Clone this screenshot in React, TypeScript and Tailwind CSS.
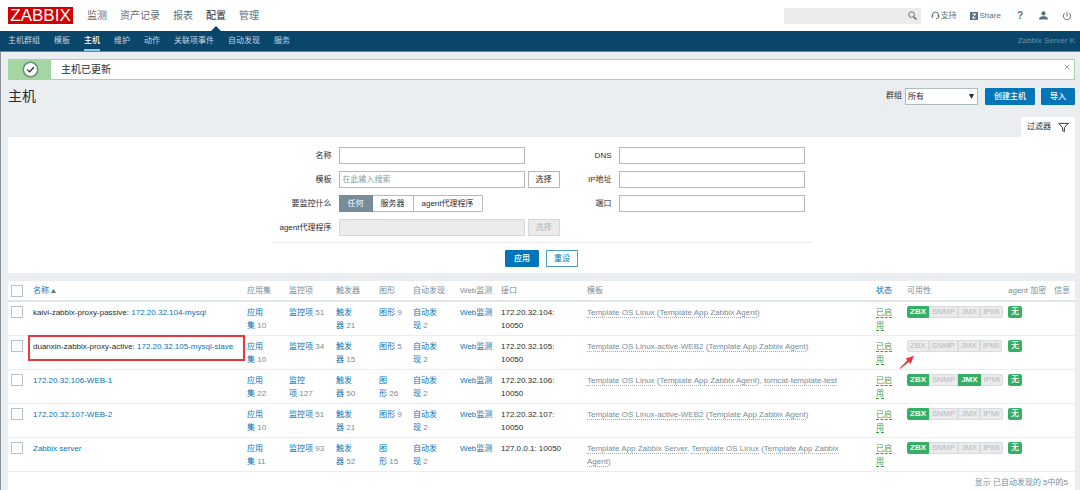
import React from "react";
import clsx from "clsx";
import { IoMdPower } from "react-icons/io";
import { FiFilter } from "react-icons/fi";

const MAIN_MENU = ["监测", "资产记录", "报表", "配置", "管理"];
const SUB_MENU = ["主机群组", "模板", "主机", "维护", "动作", "关联项事件", "自动发现", "服务"];

type Host = {
  proxy?: string;
  name: string;
  apps: number;
  items: number;
  triggers: number;
  graphs: number;
  iface: string;
  templates: { name: string; parent?: string }[];
  available: string[];
  marked?: boolean;
};

const AGENT = "Template App Zabbix Agent";

const HOSTS: Host[] = [
  {
    proxy: "kaivi-zabbix-proxy-passive",
    name: "172.20.32.104-mysql",
    apps: 10,
    items: 51,
    triggers: 21,
    graphs: 9,
    iface: "172.20.32.104: 10050",
    templates: [{ name: "Template OS Linux", parent: AGENT }],
    available: ["ZBX"],
  },
  {
    proxy: "duanxin-zabbix-proxy-active",
    name: "172.20.32.105-mysql-slave",
    apps: 10,
    items: 34,
    triggers: 15,
    graphs: 5,
    iface: "172.20.32.105: 10050",
    templates: [{ name: "Template OS Linux-active-WEB2", parent: AGENT }],
    available: [],
    marked: true,
  },
  {
    name: "172.20.32.106-WEB-1",
    apps: 22,
    items: 127,
    triggers: 50,
    graphs: 26,
    iface: "172.20.32.106: 10050",
    templates: [{ name: "Template OS Linux", parent: AGENT }, { name: "tomcat-template-test" }],
    available: ["ZBX", "JMX"],
  },
  {
    name: "172.20.32.107-WEB-2",
    apps: 10,
    items: 51,
    triggers: 21,
    graphs: 9,
    iface: "172.20.32.107: 10050",
    templates: [{ name: "Template OS Linux-active-WEB2", parent: AGENT }],
    available: ["ZBX"],
  },
  {
    name: "Zabbix server",
    apps: 11,
    items: 93,
    triggers: 52,
    graphs: 15,
    iface: "127.0.0.1: 10050",
    templates: [{ name: "Template App Zabbix Server" }, { name: "Template OS Linux", parent: AGENT }],
    available: ["ZBX"],
  },
];

const Header = () => (
  <header className="flex h-[31px] items-center bg-white pl-2 pr-2 text-[#5d6f7a]">
    <a href="#" className="flex h-[17px] w-[65px] items-center justify-center bg-[#d40000] text-[17px] leading-none text-white">
      ZABBIX
    </a>
    <nav className="ml-[14px] flex h-full gap-[13px] text-[10px]">
      {MAIN_MENU.map((label) => (
        <a key={label} href="#" className={clsx("relative flex items-center", label === "配置" && "text-[#1f2c33]")}>
          {label}
          {label === "配置" && (
            <svg className="absolute bottom-0 left-[5px]" width="10" height="5" viewBox="0 0 10 5">
              <path d="M0 5 5 0l5 5z" fill="#0a466a" />
            </svg>
          )}
        </a>
      ))}
    </nav>
    <div className="ml-auto flex items-center">
      <div className="flex h-4 w-[137px] items-center bg-[#ebebeb] pr-1">
        <input type="text" aria-label="搜索" className="h-full min-w-0 flex-1 bg-transparent px-1 outline-none" />
        <button type="button" aria-label="搜索">
          <svg width="9" height="9" viewBox="0 0 9 9" fill="none" stroke="#5d6f7a">
            <circle cx="3.6" cy="3.6" r="2.8" />
            <path d="m5.7 5.7 2.8 2.8" strokeWidth="1.5" />
          </svg>
        </button>
      </div>
      <a href="#" className="ml-[10px] flex items-center gap-px">
        <svg width="9" height="9" viewBox="0 0 9 9" fill="none" stroke="#5d6f7a">
          <path d="M1.5 5V4a3 3 0 0 1 6 0v1.2c0 1.6-.8 2.6-2.5 2.8" />
          <path d="M1.4 3.8v2.6M7.6 3.8v2.6" strokeWidth="1.5" />
        </svg>
        支持
      </a>
      <a href="#" className="ml-[13px] flex items-center gap-[2px]">
        <svg width="8" height="8" viewBox="0 0 8 8">
          <path d="M0 0h8v8H0z" fill="#5d6f7a" />
          <path d="M2.2 2h3.6L2.2 6h3.6" fill="none" stroke="#fff" />
        </svg>
        Share
      </a>
      <a href="#" className="ml-4 text-[10px] font-bold">
        ?
      </a>
      <a href="#" aria-label="用户" className="ml-4">
        <svg width="9" height="9" viewBox="0 0 9 9" fill="#5d6f7a">
          <circle cx="4.5" cy="2.4" r="2.1" />
          <path d="M0 8.5C0 6 2 5.4 3.4 5.2h2.2C7 5.4 9 6 9 8.5z" />
        </svg>
      </a>
      <a href="#" aria-label="退出" className="ml-[14px]">
        <IoMdPower size={10} />
      </a>
    </div>
  </header>
);

const SubNav = () => (
  <nav className="flex h-[21px] items-center gap-[14px] border-b border-[#5c8aa6] bg-[#0a466a] pl-2 pr-[5px] text-[#c4d6e1]">
    {SUB_MENU.map((label) => (
      <a
        key={label}
        href="#"
        className={clsx("flex h-full items-center border-y-2 border-transparent", label === "主机" && "border-b-[#8cc8ee] font-medium text-white")}
      >
        {label}
      </a>
    ))}
    <span className="ml-auto text-[#6d94ac]">Zabbix Server K</span>
  </nav>
);

const Button = ({ children, variant = "outline", disabled }: { children: React.ReactNode; variant?: string; disabled?: boolean }) => (
  <button
    type="button"
    disabled={disabled}
    className={clsx(
      "h-[17px] shrink-0 border leading-[15px]",
      variant === "primary" ? "px-2" : "px-[7px]",
      variant === "primary" && "rounded-[1px] border-[#0275b8] bg-[#0275b8] font-medium text-white",
      variant === "outline" && "border-[#4f9dcc] bg-white text-[#0275b8]",
      variant === "plain" && "border-[#acbbc2] bg-white text-[#1f2c33]",
      variant === "disabled" && "border-[#d3d8da] bg-[#ebebeb] text-[#acbbc2]"
    )}
  >
    {children}
  </button>
);

const Field = ({ id, label, placeholder, disabled }: { id: string; label: string; placeholder?: string; disabled?: boolean }) => (
  <>
    <label htmlFor={id} className="whitespace-nowrap pr-1 text-right">
      {label}
    </label>
    <input
      id={id}
      type="text"
      placeholder={placeholder}
      disabled={disabled}
      className="h-[17px] w-full border border-[#acbbc2] bg-white px-[3px] outline-none placeholder:text-[#8c989e] disabled:border-[#d3d8da] disabled:bg-[#ebebeb]"
    />
  </>
);

const Filter = () => (
  <section>
    <div className="flex justify-end">
      <button type="button" className="flex h-5 items-center gap-[7px] bg-white px-[6px] text-[8px]">
        过滤器
        <FiFilter size={11} className="text-[#1f2c33]" />
      </button>
    </div>
    <form className="bg-white pb-[6px] pt-[10px]">
      <div className="mx-auto w-full max-w-[540px]">
        <div className="flex justify-between pr-[7px]">
          <div className="grid grid-cols-[64px_186px_32px] items-center gap-x-[3px] gap-y-[7px]">
            <Field id="name" label="名称" />
            <span />
            <Field id="template" label="模板" placeholder="在此输入搜索" />
            <Button variant="plain">选择</Button>
            <span className="pr-1 text-right">要监控什么</span>
            <div className="col-span-2 flex">
              {["任何", "服务器", "agent代理程序"].map((label, i) => (
                <label
                  key={label}
                  className="relative h-[17px] whitespace-nowrap border border-l-0 border-[#acbbc2] px-2 leading-[15px] first:border-l last:rounded-r-xs has-checked:border-[#768d99] has-checked:bg-[#768d99] has-checked:text-white"
                >
                  <input type="radio" name="monitored" defaultChecked={i === 0} className="sr-only" />
                  {label}
                </label>
              ))}
            </div>
            <Field id="proxy" label="agent代理程序" disabled />
            <Button variant="disabled" disabled>
              选择
            </Button>
          </div>
          <div className="grid grid-cols-[44px_186px] content-start items-center gap-x-[3px] gap-y-[7px]">
            <Field id="dns" label="DNS" />
            <Field id="ip" label="IP地址" />
            <Field id="port" label="端口" />
          </div>
        </div>
        <div className="mt-[6px] flex justify-center gap-[7px] border-t border-[#ebeef0] pt-[7px]">
          <Button variant="primary">应用</Button>
          <Button>重设</Button>
        </div>
      </div>
    </form>
  </section>
);

const Checkbox = ({ label }: { label: string }) => (
  <input type="checkbox" aria-label={label} className="block size-3 appearance-none border border-[#b5c1c7] bg-white" />
);

const Count = ({ label, value }: { label: string; value: number }) => (
  <td className="px-[5px] pb-[3px] pt-1 text-[#768d99]">
    <a href="#" className="text-[#0275b8]">
      {label}
    </a>
    {"\u00a0"}
    {value}
  </td>
);

const TemplateLink = ({ name }: { name: string }) => (
  <a href="#" className="border-b border-dotted border-[#9fb0b9]">
    {name}
  </a>
);

const HostRow = ({ host }: { host: Host }) => (
  <tr className="h-[34px] border-b border-[#ebeef0] align-top">
    <td className="pl-[3px] pt-1">
      <Checkbox label={host.name} />
    </td>
    <td className="relative whitespace-nowrap px-[5px] pb-[3px] pt-1">
      {host.proxy && `${host.proxy}: `}
      <a href="#" className="text-[#0275b8]">
        {host.name}
      </a>
      {host.marked && <span className="absolute -right-[3px] -top-px left-0 h-[26px] border-2 border-[#e8383d]" />}
    </td>
    <Count label="应用集" value={host.apps} />
    <Count label="监控项" value={host.items} />
    <Count label="触发器" value={host.triggers} />
    <Count label="图形" value={host.graphs} />
    <Count label="自动发现" value={2} />
    <td className="whitespace-nowrap px-[5px] pb-[3px] pt-1">
      <a href="#" className="text-[#0275b8]">
        Web监测
      </a>
    </td>
    <td className="px-[5px] pb-[3px] pt-1">{host.iface}</td>
    <td className="pb-[3px] pl-[5px] pr-5 pt-1 text-[#768d99]">
      {host.templates.map((t, i) => (
        <React.Fragment key={t.name}>
          {i > 0 && ", "}
          <TemplateLink name={t.name} />
          {t.parent && (
            <>
              {" ("}
              <TemplateLink name={t.parent} />)
            </>
          )}
        </React.Fragment>
      ))}
    </td>
    <td className="px-[5px] pb-[3px] pt-1">
      <a href="#" className="border-b border-dashed border-[#429e47] text-[#429e47]">
        已启用
      </a>
    </td>
    <td className="relative px-[5px] pb-[3px] pt-1">
      <div className="flex">
        {["ZBX", "SNMP", "JMX", "IPMI"].map((type) => (
          <span
            key={type}
            className={clsx(
              "h-3 border px-[2px] leading-[10px] first:rounded-l-xs last:rounded-r-xs",
              host.available.includes(type) ? "border-[#34af67] bg-[#34af67] font-bold text-white" : "border-[#d8dcde] bg-[#ebebeb] text-[#b5bcc0]"
            )}
          >
            {type}
          </span>
        ))}
      </div>
      {host.marked && (
        <svg className="absolute -left-[3px] top-[19px]" width="16" height="15" viewBox="0 0 16 15" fill="#e8383d">
          <path d="M.5 13.5 8.3 5.2 6.6 3.6 15 .8l-3.4 8.1-1.7-1.8L1 14z" />
        </svg>
      )}
    </td>
    <td className="px-[5px] pb-[3px] pt-1">
      <span className="block h-3 w-[14px] rounded-xs bg-[#34af67] text-center font-medium leading-3 text-white">无</span>
    </td>
    <td />
  </tr>
);

const HostTable = () => (
  <section className="mt-2 bg-white">
    <table className="w-full table-fixed border-collapse text-left leading-[13px]">
      <colgroup>
        <col className="w-5" />
        <col className="w-[214px]" />
        <col className="w-[42px]" />
        <col className="w-[47px]" />
        <col className="w-[43px]" />
        <col className="w-[34px]" />
        <col className="w-[47px]" />
        <col className="w-[41px]" />
        <col className="w-[86px]" />
        <col />
        <col className="w-[31px]" />
        <col className="w-[101px]" />
        <col className="w-[46px]" />
        <col className="w-[26px]" />
      </colgroup>
      <thead>
        <tr className="h-5 border-b-2 border-[#dfe4e7] text-[#768d99] [&>th]:whitespace-nowrap [&>th]:px-[5px] [&>th]:font-normal">
          <td className="pl-[3px]">
            <Checkbox label="全选" />
          </td>
          <th>
            <a href="#" className="flex items-center gap-[2px] text-[#0275b8]">
              名称
              <svg width="5" height="4" viewBox="0 0 5 4" fill="#5d6f7a">
                <path d="M0 4 2.5 0 5 4z" />
              </svg>
            </a>
          </th>
          <th>应用集</th>
          <th>监控项</th>
          <th>触发器</th>
          <th>图形</th>
          <th>自动发现</th>
          <th>Web监测</th>
          <th>接口</th>
          <th>模板</th>
          <th>
            <a href="#" className="text-[#0275b8]">
              状态
            </a>
          </th>
          <th>可用性</th>
          <th>agent 加密</th>
          <th>信息</th>
        </tr>
      </thead>
      <tbody>
        {HOSTS.map((host) => (
          <HostRow key={host.name} host={host} />
        ))}
      </tbody>
    </table>
    <p className="pr-[7px] pt-1 text-right leading-[14px] text-[#768d99]">显示 已自动发现的 5中的5</p>
  </section>
);

export default function App() {
  return (
    <div className="min-h-screen bg-[#ebeef0] font-['Liberation_Sans','Noto_Sans_CJK_SC',sans-serif] text-[8px] leading-3 text-[#1f2c33]">
      <Header />
      <SubNav />
      <main className="border-l border-[#8b9297] pl-[7px] pr-[5px] pt-[7px]">
        <div role="status" className="flex h-[21px] items-center border border-[#a3d6a1] bg-white text-[10px]">
          <span className="flex h-full w-[42px] items-center justify-center bg-[#a3d6a1]">
            <svg width="17" height="17" viewBox="0 0 17 17" fill="none">
              <circle cx="8.5" cy="8.5" r="7.2" fill="#fff" stroke="#6f8f78" strokeWidth="1.6" />
              <path d="m5.2 8.6 2.4 2.3 4.2-4.6" stroke="#1f2c33" strokeWidth="1.3" />
            </svg>
          </span>
          <span className="ml-[10px]">主机已更新</span>
          <button type="button" aria-label="关闭" className="ml-auto mr-1 self-start pt-1">
            <svg width="6" height="6" viewBox="0 0 6 6" stroke="#97a5ac">
              <path d="m.7.7 4.6 4.6M5.3.7.7 5.3" />
            </svg>
          </button>
        </div>
        <div className="flex h-8 items-center">
          <h1 className="text-[14px] leading-5">主机</h1>
          <div className="ml-auto flex items-center">
            <label htmlFor="group">群组</label>
            <div className="relative ml-[3px]">
              <select id="group" className="h-[17px] w-[73px] appearance-none border border-[#acbbc2] bg-white pl-[2px] leading-[15px] outline-none">
                <option>所有</option>
              </select>
              <svg className="pointer-events-none absolute right-1 top-[6px]" width="5" height="5" viewBox="0 0 5 5">
                <path d="M0 0h5L2.5 5z" fill="#1f2c33" />
              </svg>
            </div>
            <div className="ml-[7px] flex gap-[6px]">
              <Button variant="primary">创建主机</Button>
              <Button variant="primary">导入</Button>
            </div>
          </div>
        </div>
        <div className="mt-[5px]">
          <Filter />
        </div>
        <HostTable />
      </main>
    </div>
  );
}
